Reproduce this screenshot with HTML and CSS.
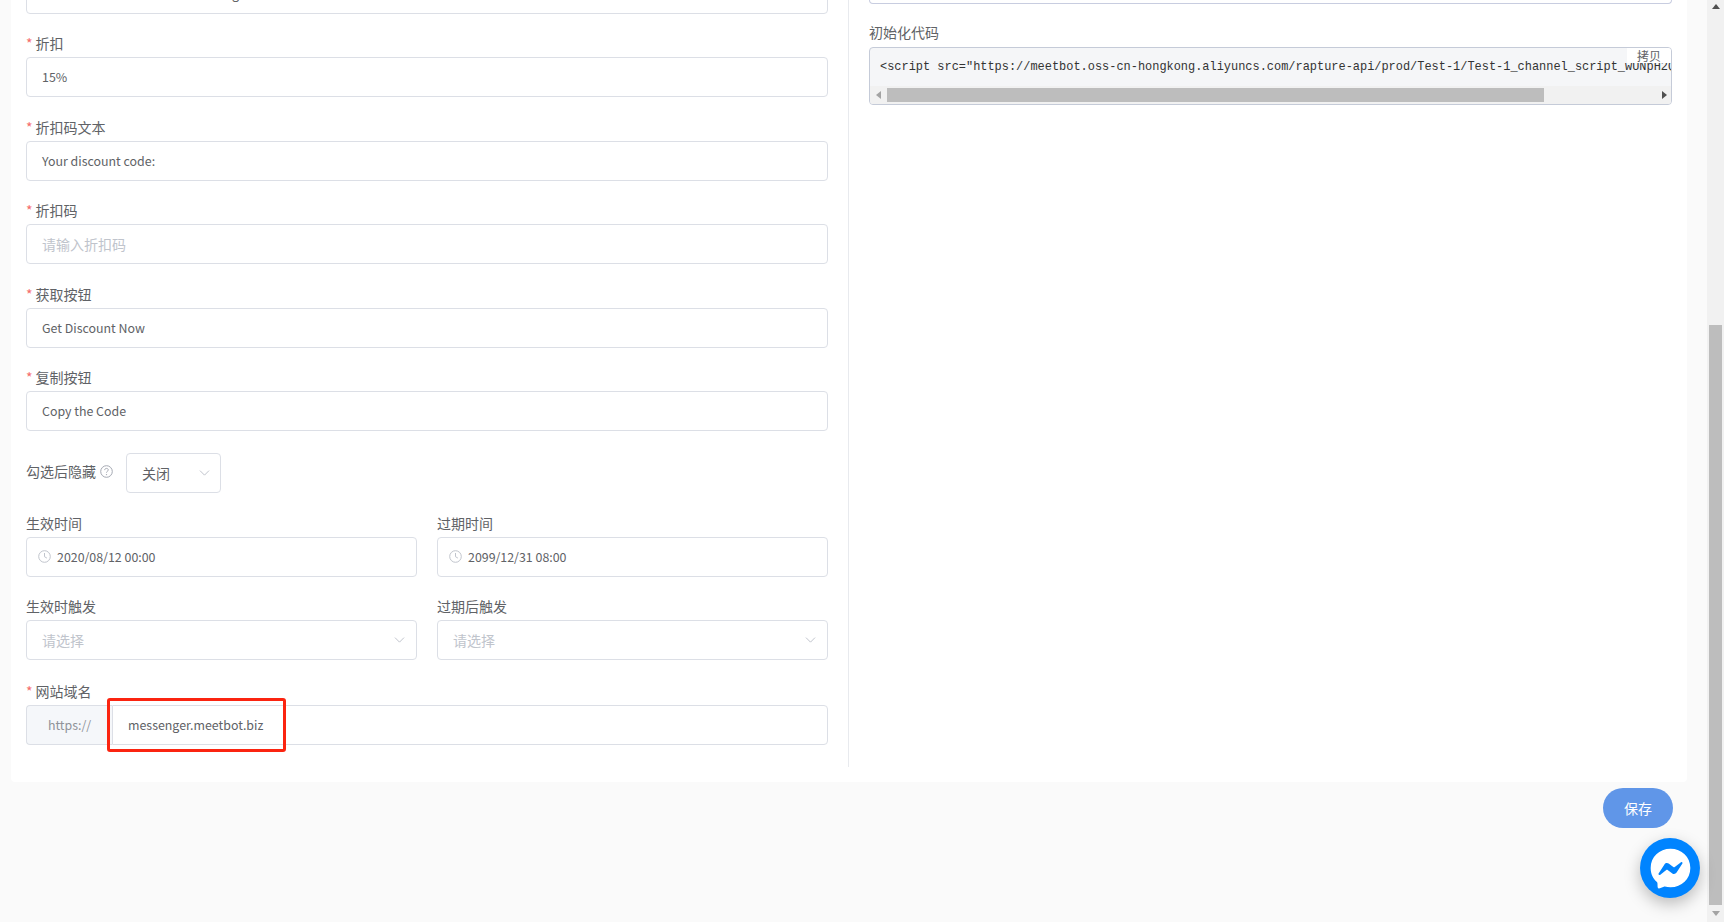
FILE: index.html
```html
<!DOCTYPE html>
<html lang="zh-CN">
<head>
<meta charset="utf-8">
<title>Form</title>
<link rel="stylesheet" href="styles.css">
</head>
<body>
<div class="app">
  <main class="main">
    <section class="card">
      <div class="col col-left">
        <div class="item">
          <label class="label req">标题</label>
          <div class="input">Thanks a whole lot for subscribing</div>
        </div>
        <div class="item">
          <label class="label req">折扣</label>
          <div class="input">15%</div>
        </div>
        <div class="item">
          <label class="label req">折扣码文本</label>
          <div class="input">Your discount code:</div>
        </div>
        <div class="item">
          <label class="label req">折扣码</label>
          <div class="input placeholder">请输入折扣码</div>
        </div>
        <div class="item">
          <label class="label req">获取按钮</label>
          <div class="input">Get Discount Now</div>
        </div>
        <div class="item">
          <label class="label req">复制按钮</label>
          <div class="input">Copy the Code</div>
        </div>
        <div class="item item-inline">
          <label class="label label-inline">勾选后隐藏
            <svg class="help" viewBox="0 0 13 13" width="13" height="13"><circle cx="6.5" cy="6.5" r="5.8" fill="none" stroke="#a4a8b2" stroke-width="1"/><path d="M4.7 5.1c0-1.1.8-1.7 1.8-1.7s1.8.6 1.8 1.5c0 1.3-1.8 1.4-1.8 2.7" fill="none" stroke="#a4a8b2" stroke-width="1"/><circle cx="6.5" cy="9.6" r=".7" fill="#a4a8b2"/></svg>
          </label>
          <div class="input select select-small">关闭
            <svg class="chevron" viewBox="0 0 12 7" width="11" height="6"><path d="M.7.7 6 6l5.3-5.3" fill="none" stroke="#bcc0c9" stroke-width="1.1"/></svg>
          </div>
        </div>
        <div class="pair">
          <div class="item">
            <label class="label">生效时间</label>
            <div class="input date">
              <svg class="clock" viewBox="0 0 13 13" width="13" height="13"><circle cx="6.5" cy="6.5" r="5.8" fill="none" stroke="#c0c4cc" stroke-width="1"/><path d="M6.5 3v3.7l2.4 1.4" fill="none" stroke="#c0c4cc" stroke-width="1"/></svg>
              2020/08/12 00:00
            </div>
          </div>
          <div class="item">
            <label class="label">过期时间</label>
            <div class="input date">
              <svg class="clock" viewBox="0 0 13 13" width="13" height="13"><circle cx="6.5" cy="6.5" r="5.8" fill="none" stroke="#c0c4cc" stroke-width="1"/><path d="M6.5 3v3.7l2.4 1.4" fill="none" stroke="#c0c4cc" stroke-width="1"/></svg>
              2099/12/31 08:00
            </div>
          </div>
        </div>
        <div class="pair">
          <div class="item">
            <label class="label">生效时触发</label>
            <div class="input select placeholder">请选择
              <svg class="chevron" viewBox="0 0 12 7" width="11" height="6"><path d="M.7.7 6 6l5.3-5.3" fill="none" stroke="#bcc0c9" stroke-width="1.1"/></svg>
            </div>
          </div>
          <div class="item">
            <label class="label">过期后触发</label>
            <div class="input select placeholder">请选择
              <svg class="chevron" viewBox="0 0 12 7" width="11" height="6"><path d="M.7.7 6 6l5.3-5.3" fill="none" stroke="#bcc0c9" stroke-width="1.1"/></svg>
            </div>
          </div>
        </div>
        <div class="item item-last">
          <label class="label req">网站域名</label>
          <div class="group">
            <div class="prefix">https://</div>
            <div class="input group-input">messenger.meetbot.biz</div>
            <div class="highlight"></div>
          </div>
        </div>
      </div>
      <div class="col col-right">
        <div class="code-top"></div>
        <label class="label code-label">初始化代码</label>
        <div class="code">
          <div class="code-line">&lt;script src="https://meetbot.oss-cn-hongkong.aliyuncs.com/rapture-api/prod/Test-1/Test-1_channel_script_wUNpH2Q.js"&gt;&lt;/script&gt;</div>
          <button class="copy">拷贝</button>
          <div class="hbar">
            <span class="arrow arrow-left"></span>
            <div class="hbar-track"><div class="hbar-thumb"></div></div>
            <span class="arrow arrow-right"></span>
          </div>
        </div>
      </div>
    </section>
    <div class="actions"><button class="save">保存</button></div>
  </main>
  <aside class="vbar">
    <span class="arrow arrow-up"></span>
    <div class="vbar-thumb"></div>
    <span class="arrow arrow-down"></span>
  </aside>
</div>
<div class="messenger">
  <svg viewBox="0 0 36 36" width="51" height="51"><path fill="#fff" d="M18 4C10.1 4 4 9.8 4 17.6c0 4.1 1.7 7.6 4.4 10 .2.2.4.5.4.9l.1 2.5c0 .8.8 1.3 1.6 1l2.8-1.2c.2-.1.5-.1.7-.1 1.3.4 2.6.5 4 .5 7.9 0 14-5.8 14-13.6S25.9 4 18 4z"/><path fill="#0084ff" d="M9.6 21.6l4.1-6.5c.7-1 2-1.3 3-.6l3.3 2.4c.3.2.7.2 1 0l4.4-3.4c.6-.5 1.4.3 1 .9l-4.1 6.5c-.7 1-2 1.3-3 .6l-3.3-2.4c-.3-.2-.7-.2-1 0l-4.4 3.4c-.6.5-1.4-.3-1-.9z"/></svg>
</div>
</body>
</html>
```
FILE: styles.css
```css
* { box-sizing: border-box; }
html, body { margin: 0; padding: 0; height: 100%; overflow: hidden; }
body {
  font-family: "Noto Sans CJK SC", "Noto Sans", sans-serif;
  font-size: 14px;
  color: #606266;
  background: #fafafa;
}
.app { display: flex; height: 922px; }
.main { flex: 1; min-width: 0; padding-left: 11px; overflow: hidden; }
.card {
  display: flex;
  width: 1676px;
  margin-top: -50.5px;
  padding: 0 15px 15px;
  background: #fff;
  border-radius: 4px;
}
.col-left { width: 823px; padding-right: 20px; border-right: 1px solid #e8eaee; padding-bottom: 22px; }
.col-right { width: 823px; padding-left: 20px; padding-top: 50.5px; }
.item { margin-bottom: 19.5px; }
.item-last { margin-bottom: 0; margin-top: 1px; }
.label { display: block; height: 21px; margin-bottom: 3px; line-height: 20px; color: #606266; }
.req::before { content: "*"; margin-right: 3px; color: #f56c6c; }
.input {
  display: flex;
  align-items: center;
  height: 40px;
  padding: 0 15px;
  background: #fff;
  border: 1px solid #dcdfe6;
  border-radius: 4px;
  font-size: 12.4px;
  line-height: 38px;
  white-space: nowrap;
}
.placeholder { color: #c0c4cc; font-size: 14px; }
.select { justify-content: space-between; padding-right: 11px; }
.item-inline { display: flex; align-items: center; margin-top: -17.5px; padding-top: 20px; }
.label-inline { display: flex; align-items: center; gap: 4px; width: 100px; margin: -4px 0 0; }
.select-small { width: 95px; padding-right: 10px; font-size: 14px; }
.help { flex: none; }
.chevron { flex: none; }
.pair { display: grid; grid-template-columns: 391px 391px; gap: 20px; }
.date { gap: 6px; padding-left: 11px; }
.clock { flex: none; }
.group { position: relative; display: flex; }
.prefix {
  flex: none;
  width: 86px;
  height: 40px;
  background: #f5f7fa;
  border: 1px solid #dcdfe6;
  border-right: 0;
  border-radius: 4px 0 0 4px;
  color: #909399;
  font-size: 12.4px;
  line-height: 38px;
  text-align: center;
}
.group-input { flex: 1; padding-left: 15px; border-radius: 0 4px 4px 0; }
.highlight {
  position: absolute;
  left: 81px;
  top: -7px;
  width: 179px;
  height: 54px;
  border: 3px solid #fb2410;
  border-radius: 3px;
}
.code-top {
  height: 4px;
  border: 1px solid #c8cde0;
  border-top: 0;
  border-radius: 0 0 4px 4px;
  margin-bottom: 18px;
}
.code-label { margin-bottom: 4px; }
.code {
  position: relative;
  width: 803px;
  height: 58px;
  overflow: hidden;
  background: #f5f6f8;
  border: 1px solid #c5cbd8;
  border-radius: 4px;
}
.code-line {
  height: 38px;
  padding-left: 10px;
  overflow: hidden;
  color: #333;
  font-family: "Liberation Mono", monospace;
  font-size: 11.95px;
  line-height: 38px;
  white-space: nowrap;
}
.copy {
  position: absolute;
  top: 0;
  right: 0;
  width: 44px;
  height: 15px;
  padding: 0;
  background: #fff;
  border: 0;
  color: #606266;
  font: 12px/14px "Noto Sans CJK SC", sans-serif;
}
.hbar { display: flex; align-items: center; height: 18px; background: #f1f1f1; }
.hbar-track { flex: 1; height: 14px; }
.hbar-thumb { width: 657px; height: 14px; background: #bdbdbd; }
.arrow { flex: none; display: block; width: 0; height: 0; border-style: solid; border-color: transparent; }
.arrow-left { margin: 0 6px 0 6px; border-width: 4px 5px 4px 0; border-right-color: #a3a3a3; }
.arrow-right { margin: 0 4px 0 5px; border-width: 4px 0 4px 5px; border-left-color: #505050; }
.actions { display: flex; justify-content: flex-end; padding: 6px 34px 0 0; }
.save {
  width: 70px;
  height: 40px;
  background: #6096e8;
  border: 0;
  border-radius: 20px;
  color: #fff;
  font: 14px "Noto Sans CJK SC", sans-serif;
}
.vbar { flex: none; display: flex; flex-direction: column; align-items: center; width: 17px; background: #f1f1f1; }
.arrow-up { margin: 4px 0 5px; border-width: 0 4px 5px; border-bottom-color: #505050; }
.arrow-down { margin: 6px 0 6px; border-width: 5px 4px 0; border-top-color: #a3a3a3; }
.vbar-thumb { width: 13px; height: 580px; margin-top: auto; background: #bdbdbd; }
.messenger {
  position: fixed;
  left: 1640px;
  top: 838px;
  display: flex;
  align-items: center;
  justify-content: center;
  width: 60px;
  height: 60px;
  border-radius: 50%;
  background: #0084ff;
  box-shadow: 0 6px 16px rgba(0, 0, 0, .25);
}
```
